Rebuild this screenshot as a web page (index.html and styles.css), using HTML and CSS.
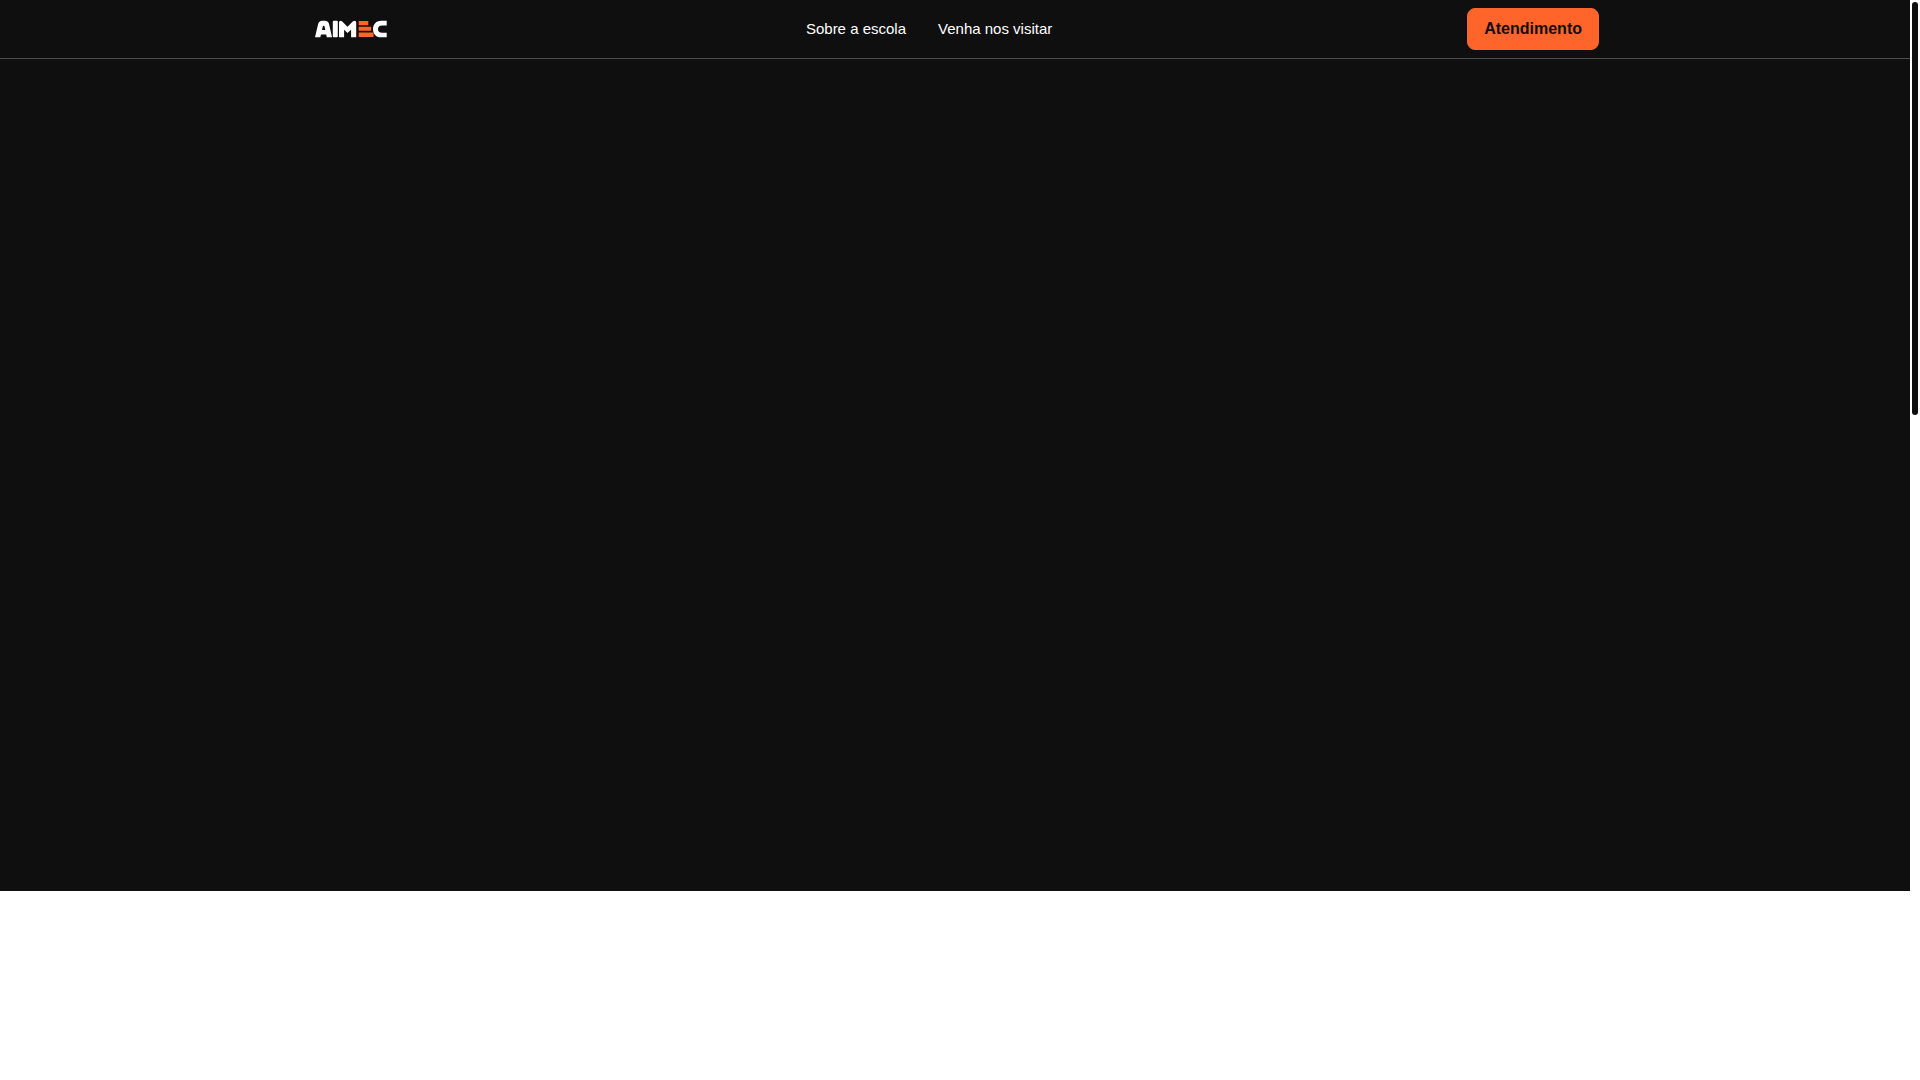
FILE: index.html
```html
<!DOCTYPE html>
<html lang="pt-BR">

<head>
    <meta charset="UTF-8">
    <meta name="viewport" content="width=device-width, initial-scale=1.0">
    <title>AIMEC</title>
    <link rel="stylesheet" href="styles.css">
</head>

<body>
    <div class="page">
        <div class="page-content">
            <header class="header">
                <div class="container">
                    <a href="#" class="logo" aria-label="AIMEC">
                        <svg width="80" height="20" viewBox="0 0 80 20">
                            <g fill="#fff" fill-rule="evenodd">
                                <path d="M4 18.3 7 5.5Q8 1.8 11 1.8H14Q17.3 1.8 18.2 5.5L21 18.3H15.8L15.2 15.4H10L9.3 18.3ZM11 10.9H14.3L13.6 7.6Q13.4 6.8 12.7 6.8T11.8 7.6Z" />
                                <rect x="21.8" y="1.8" width="5" height="16.5" rx="1" />
                                <path d="M28 18.3V3.5Q28 1.8 29.5 1.8L31 2.3 36.5 7.8 42 2.3 43.5 1.8Q45.2 1.8 45.2 3.5V18.3H40.1V10.7L36.5 14 33.1 10.7V18.3Z" />
                                <path d="M75.7 1.8H70.2C64.5 1.8 62 6 62 10.2S64.5 18.3 70.2 18.3H75.7V13.7H71.2C68.2 13.7 67 12.3 67 10.2S68.2 6.5 71.2 6.5H75.7Z" />
                            </g>
                            <path fill="#ff652b" d="M47.7 2H57.3V6.2H47.7ZM47.7 7.8H60.2V11.8H47.7ZM47.7 13.6H62.5V18H47.7Z" />
                        </svg>
                    </a>
                    <nav class="menu">
                        <a href="#sobre">Sobre a escola</a>
                        <a href="#visita">Venha nos visitar</a>
                    </nav>
                    <button type="button" class="btn">Atendimento</button>
                </div>
            </header>
            <main>
                <section class="hero"></section>
                <section class="content" id="sobre"></section>
                <section class="content" id="visita"></section>
            </main>
        </div>
        <div class="scrollbar" aria-hidden="true">
            <div class="scrollbar-thumb"></div>
        </div>
    </div>
</body>

</html>
```
FILE: styles.css
```css
* {
    margin: 0;
    padding: 0;
    box-sizing: border-box;
}

body {
    font-family: "Liberation Sans", Arial, sans-serif;
    background-color: #fff;
}

/* Scroll area */
.page {
    display: flex;
    height: 100vh;
}

.page-content {
    flex: 1;
    overflow-y: auto;
    scrollbar-width: none;
}

.scrollbar {
    width: 10px;
    padding: 2px;
    background-color: #fff;
}

.scrollbar-thumb {
    height: 38.4%;
    border-radius: 3px;
    background-color: #0f0f0f;
}

/* Header */
.header {
    position: sticky;
    top: 0;
    background-color: #0f0f0f;
    border-bottom: 1px solid #4d4d4d;
}

.container {
    display: flex;
    align-items: center;
    justify-content: space-between;
    max-width: 1320px;
    margin: 0 auto;
    padding: 8px 16px;
}

.logo svg {
    display: block;
}

.menu {
    display: flex;
    gap: 32px;
}

.menu a {
    color: #fff;
    font-size: 15px;
    line-height: 20px;
    text-decoration: none;
}

.btn {
    height: 42px;
    padding: 0 16px;
    border: 1px solid #ff652b;
    border-radius: 8px;
    background-color: #ff652b;
    color: #0f0f0f;
    font-family: inherit;
    font-size: 16px;
    font-weight: bold;
    cursor: pointer;
}

/* Sections */
.hero {
    height: 77vh;
    background-color: #0f0f0f;
}

.content {
    min-height: 88vh;
}
```
